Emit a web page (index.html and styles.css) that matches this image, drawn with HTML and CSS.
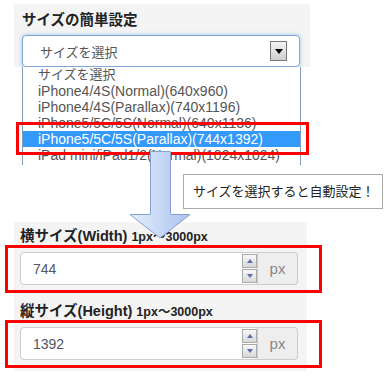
FILE: index.html
```html
<!DOCTYPE html>
<html lang="ja">
<head>
    <meta charset="UTF-8">
    <title>サイズの簡単設定</title>
    <link rel="stylesheet" href="styles.css">
</head>
<body>
    <div class="page">
        <section class="panel panel-top">
            <h2 class="panel-title">サイズの簡単設定</h2>
            <div class="select">
                <span class="select-text">サイズを選択</span>
                <span class="select-btn">
                    <svg width="8" height="5" viewBox="0 0 8 5"><polygon points="0,0 8,0 4,5" fill="#000"/></svg>
                </span>
            </div>
        </section>

        <div class="options">
            <div class="option option-jp">サイズを選択</div>
            <div class="option">iPhone4/4S(Normal)(640x960)</div>
            <div class="option">iPhone4/4S(Parallax)(740x1196)</div>
            <div class="option">iPhone5/5C/5S(Normal)(640x1136)</div>
            <div class="option selected">iPhone5/5C/5S(Parallax)(744x1392)</div>
            <div class="option">iPad mini/iPad1/2(Normal)(1024x1024)</div>
            <div class="mark-option"></div>
        </div>

        <p class="hint">サイズを選択すると自動設定！</p>

        <section class="panel panel-size">
            <h3 class="size-label">横サイズ(Width) <small>1px〜3000px</small></h3>
            <div class="mark-box">
                <div class="input-group">
                    <div class="field">
                        <span class="field-value">744</span>
                        <div class="spin">
                            <span class="spin-btn"><svg width="6" height="4" viewBox="0 0 6 4"><polygon points="0,4 6,4 3,0" fill="#5a6fa8"/></svg></span>
                            <span class="spin-btn"><svg width="6" height="4" viewBox="0 0 6 4"><polygon points="0,0 6,0 3,4" fill="#5a6fa8"/></svg></span>
                        </div>
                    </div>
                    <span class="addon">px</span>
                </div>
            </div>

            <h3 class="size-label second">縦サイズ(Height) <small>1px〜3000px</small></h3>
            <div class="mark-box">
                <div class="input-group">
                    <div class="field">
                        <span class="field-value">1392</span>
                        <div class="spin">
                            <span class="spin-btn"><svg width="6" height="4" viewBox="0 0 6 4"><polygon points="0,4 6,4 3,0" fill="#5a6fa8"/></svg></span>
                            <span class="spin-btn"><svg width="6" height="4" viewBox="0 0 6 4"><polygon points="0,0 6,0 3,4" fill="#5a6fa8"/></svg></span>
                        </div>
                    </div>
                    <span class="addon">px</span>
                </div>
            </div>
        </section>

        <svg class="arrow" width="64" height="88" viewBox="0 0 64 88">
            <defs>
                <linearGradient id="arrowFill" x1="0" y1="0" x2="1" y2="0">
                    <stop offset="0" stop-color="#e6eefc"/>
                    <stop offset="1" stop-color="#a9c2ee"/>
                </linearGradient>
            </defs>
            <polygon points="22.5,0.5 42.5,0.5 42.5,63.5 62,63.5 32,87 2,63.5 22.5,63.5" fill="url(#arrowFill)" stroke="#86a2d4" stroke-width="1"/>
        </svg>
    </div>
</body>
</html>
```

FILE: styles.css
```css
body {
    margin: 0;
    background: #fff;
    font-family: "Liberation Sans", "Noto Sans CJK JP", sans-serif;
    color: #555;
}

.page {
    position: relative;
    width: 391px;
    height: 387px;
}

.panel {
    background: #f4f4f4;
    box-sizing: border-box;
}

.panel-top {
    margin: 4px 0 0 14px;
    width: 296px;
    padding: 6px 8px 0;
}

.panel-title {
    margin: 0 0 5px;
    font-size: 14.5px;
    line-height: 20px;
    font-weight: bold;
    color: #222;
}

.select {
    height: 32px;
    width: 278px;
    box-sizing: border-box;
    display: flex;
    align-items: center;
    justify-content: space-between;
    padding: 0 12px 0 17px;
    background: #fff;
    border: 1px solid #7ea7d8;
    border-radius: 4px;
    box-shadow: 0 0 4px rgba(102, 160, 230, 0.6);
}

.select-text {
    font-size: 13px;
    color: #555;
}

.select-btn {
    width: 17px;
    height: 20px;
    box-sizing: border-box;
    border: 1px solid #777;
    background: linear-gradient(#f4f4f4, #cfcfcf);
    display: flex;
    align-items: center;
    justify-content: center;
}

.options {
    position: relative;
    margin-left: 22px;
    width: 279px;
    height: 98px;
    box-sizing: border-box;
    border-left: 1px solid #7f9bc0;
    border-right: 1px solid #7f9bc0;
    background: #fff;
}

.option {
    font-size: 14px;
    line-height: 16px;
    height: 16px;
    padding-left: 15px;
    color: #555;
    white-space: nowrap;
}

.option-jp {
    font-size: 13px;
}

.option.selected {
    background: #3399fb;
    color: #fff;
}

.mark-option {
    position: absolute;
    left: -7px;
    top: 55px;
    width: 293px;
    height: 33px;
    box-sizing: border-box;
    border: 3px solid #f00;
}

.hint {
    margin: 9px 0 13px 183px;
    width: 200px;
    height: 35px;
    box-sizing: border-box;
    border: 1px solid #aaa;
    background: #fff;
    font-size: 13px;
    line-height: 33px;
    padding-left: 9px;
    color: #222;
}

.panel-size {
    margin-left: 14px;
    width: 293px;
    padding: 6px 6px 3px;
}

.size-label {
    margin: 0;
    font-size: 14.5px;
    line-height: 16px;
    font-weight: bold;
    color: #222;
    white-space: nowrap;
}

.size-label small {
    font-size: 12.5px;
}

.size-label.second {
    margin-top: 10px;
}

.mark-box {
    margin-left: -15px;
    width: 317px;
    box-sizing: border-box;
    border: 3px solid #f00;
    padding: 4px 21px 5px 12px;
}

.input-group {
    display: flex;
    height: 33px;
}

.field {
    flex: 1;
    display: flex;
    align-items: center;
    justify-content: space-between;
    background: #fff;
    border: 1px solid #ccc;
    border-radius: 4px 0 0 4px;
    padding: 0 0 0 12px;
}

.field-value {
    font-size: 14px;
    color: #556;
}

.spin {
    display: flex;
    flex-direction: column;
    gap: 1px;
}

.spin-btn {
    width: 15px;
    height: 14px;
    box-sizing: border-box;
    border: 1px solid #aaa;
    background: linear-gradient(#f8f8f8, #d8d8d8);
    display: flex;
    align-items: center;
    justify-content: center;
}

.addon {
    width: 40px;
    box-sizing: border-box;
    background: #eee;
    border: 1px solid #ccc;
    border-left: none;
    border-radius: 0 4px 4px 0;
    display: flex;
    align-items: center;
    justify-content: center;
    font-size: 15px;
    color: #888;
}

.arrow {
    position: absolute;
    left: 128px;
    top: 147px;
}
```
